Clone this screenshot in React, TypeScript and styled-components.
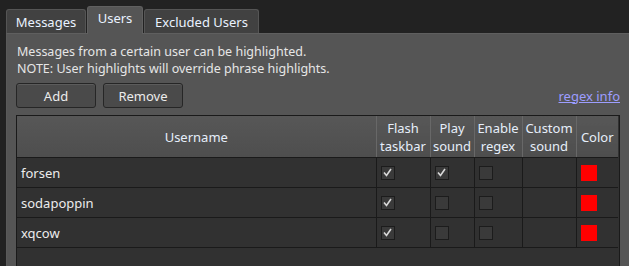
import styled, { createGlobalStyle } from "styled-components";

const GlobalStyle = createGlobalStyle`
  html, body {
    margin: 0;
    padding: 0;
    background: #222222;
    overflow: hidden;
  }
  body {
    font-family: "Noto Sans", "Open Sans", sans-serif;
    font-size: 12.5px;
    color: #e6e6e6;
  }
`;

type User = {
  name: string;
  flash: boolean;
  sound: boolean;
  regex: boolean;
  color: string;
};

const users: User[] = [
  { name: "forsen", flash: true, sound: true, regex: false, color: "#ff0000" },
  { name: "sodapoppin", flash: true, sound: false, regex: false, color: "#ff0000" },
  { name: "xqcow", flash: true, sound: false, regex: false, color: "#ff0000" },
];

const Check = ({ checked }: { checked: boolean }) => (
  <CheckBox>
    {checked && (
      <svg width="11" height="11" viewBox="0 0 11 11">
        <path d="M2 5.5 L4.5 8.5 L9 2" fill="none" stroke="#d8d8d8" strokeWidth="1.6" />
      </svg>
    )}
  </CheckBox>
);

const App = () => {
  return (
    <>
      <GlobalStyle />
      <Window>
        <TabBar>
          <Tab $width={80}>Messages</Tab>
          <Tab $width={56} $active>Users</Tab>
          <Tab $width={115}>Excluded Users</Tab>
        </TabBar>
        <Panel>
          <Note>
            Messages from a certain user can be highlighted.
            <br />
            NOTE: User highlights will override phrase highlights.
          </Note>
          <Toolbar>
            <Button>Add</Button>
            <Button>Remove</Button>
            <Spacer />
            <Link>regex info</Link>
          </Toolbar>
          <TableBox>
            <Table>
              <colgroup>
                <col style={{ width: 359 }} />
                <col style={{ width: 54 }} />
                <col style={{ width: 44 }} />
                <col style={{ width: 48 }} />
                <col style={{ width: 54 }} />
                <col style={{ width: 42 }} />
              </colgroup>
              <thead>
                <tr>
                  <Th>Username</Th>
                  <Th>Flash<br />taskbar</Th>
                  <Th>Play<br />sound</Th>
                  <Th>Enable<br />regex</Th>
                  <Th>Custom<br />sound</Th>
                  <Th>Color</Th>
                </tr>
              </thead>
              <tbody>
                {users.map((u) => (
                  <tr key={u.name}>
                    <Td>{u.name}</Td>
                    <Td><Check checked={u.flash} /></Td>
                    <Td><Check checked={u.sound} /></Td>
                    <Td><Check checked={u.regex} /></Td>
                    <Td />
                    <Td><Swatch $color={u.color} /></Td>
                  </tr>
                ))}
              </tbody>
            </Table>
          </TableBox>
        </Panel>
      </Window>
    </>
  );
};

const Window = styled.div`
  padding: 6px 0 0 6px;
  height: 260px;
  display: flex;
  flex-direction: column;
`;

const TabBar = styled.div`
  display: flex;
  align-items: flex-end;
  height: 27px;
  gap: 1px;
`;

const Tab = styled.div<{ $active?: boolean; $width: number }>`
  box-sizing: border-box;
  width: ${(p) => p.$width}px;
  height: ${(p) => (p.$active ? "28px" : "24px")};
  margin-bottom: ${(p) => (p.$active ? "-1px" : "0")};
  padding-bottom: ${(p) => (p.$active ? "5px" : "0")};
  display: flex;
  align-items: center;
  justify-content: center;
  font-size: 13px;
  background: ${(p) => (p.$active ? "#555555" : "#414141")};
  border: 1px solid ${(p) => (p.$active ? "#606060" : "#555555")};
  border-bottom: none;
  border-radius: 3px 3px 0 0;
  color: #eaf2ff;
  position: relative;
  z-index: ${(p) => (p.$active ? 1 : 0)};
`;

const Panel = styled.div`
  flex: 1;
  background: #555555;
  border-top: 1px solid #5f5f5f;
  border-left: 1px solid #5a5a5a;
  padding: 9px 0 0 9px;
  display: flex;
  flex-direction: column;
  min-height: 0;
`;

const Note = styled.div`
  font-size: 12.5px;
  line-height: 17px;
  margin-left: 1px;
`;

const Toolbar = styled.div`
  display: flex;
  align-items: center;
  gap: 7px;
  margin-top: 6px;
  padding-right: 9px;
`;

const Button = styled.div`
  box-sizing: border-box;
  width: 80px;
  height: 25px;
  display: flex;
  align-items: center;
  justify-content: center;
  font-size: 13px;
  background: #4a4a4a;
  border: 1px solid #262626;
  border-radius: 3px;
  box-shadow: inset 0 1px 0 #5c5c5c;
  color: #ececec;
`;

const Spacer = styled.div`
  flex: 1;
`;

const Link = styled.span`
  color: #9d9dff;
  text-decoration: underline;
  font-size: 13px;
`;

const TableBox = styled.div`
  margin-top: 7px;
  margin-right: 9px;
  flex: 1;
  background: #313131;
  border: 1px solid #1a1a1a;
  border-bottom: none;
  overflow: hidden;
`;

const Table = styled.table`
  border-collapse: collapse;
  table-layout: fixed;
  width: 601px;
`;

const Th = styled.th`
  height: 41px;
  padding: 0;
  font-weight: normal;
  font-size: 13px;
  line-height: 18px;
  color: #e6eefa;
  background: linear-gradient(#575757, #4e4e4e);
  border-right: 1px solid #686868;
  border-bottom: 1px solid #1a1a1a;
  text-align: center;
  vertical-align: middle;
  &:last-child {
    border-right: none;
  }
`;

const Td = styled.td`
  height: 29px;
  padding: 0 0 0 4px;
  font-size: 13px;
  color: #ececec;
  border-right: 1px solid #1a1a1a;
  border-bottom: 1px solid #1a1a1a;
  vertical-align: middle;
  &:last-child {
    border-right: none;
  }
`;

const CheckBox = styled.div`
  box-sizing: border-box;
  width: 14px;
  height: 14px;
  border: 1px solid #1c1c1c;
  background: #3a3a3a;
  display: flex;
  align-items: center;
  justify-content: center;
`;

const Swatch = styled.div<{ $color: string }>`
  width: 16px;
  height: 16px;
  background: ${(p) => p.$color};
`;

export default App;
